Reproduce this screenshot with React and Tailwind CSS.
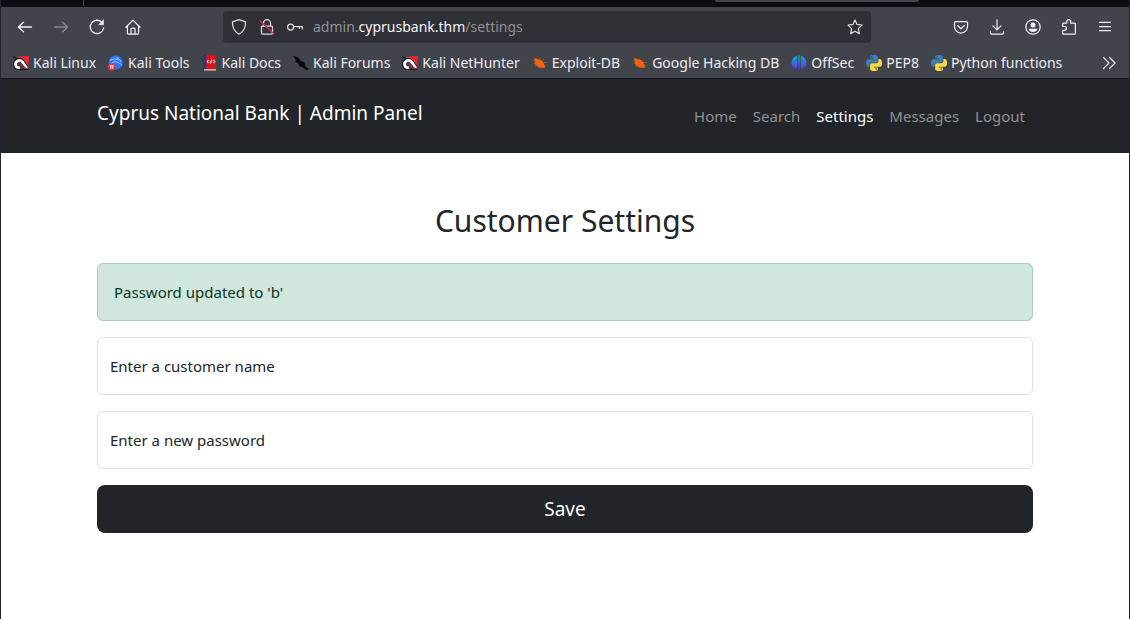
import { useState } from "react";

const PY =
  "M14.25.18l.9.2.73.26.59.3.45.32.34.34.25.34.16.33.1.3.04.26.02.2-.01.13V8.5l-.05.63-.13.55-.21.46-.26.38-.3.31-.33.25-.35.19-.35.14-.33.1-.3.07-.26.04-.21.02H8.77l-.69.05-.59.14-.5.22-.41.27-.33.32-.27.35-.2.36-.15.37-.1.35-.07.32-.04.27-.02.21v3.06H3.17l-.21-.03-.28-.07-.32-.12-.35-.18-.36-.26-.36-.36-.35-.46-.32-.59-.28-.73-.21-.88-.14-1.05-.05-1.23.06-1.22.16-1.04.24-.87.32-.71.36-.57.4-.44.42-.33.42-.24.4-.16.36-.1.32-.05.24-.01h.16l.06.01h8.16v-.83H6.18l-.01-2.75-.02-.37.05-.34.11-.31.17-.28.25-.26.31-.23.38-.2.44-.18.51-.15.58-.12.64-.1.71-.06.77-.04.84-.02 1.27.05zm-6.3 1.98l-.23.33-.08.41.08.41.23.34.33.22.41.09.41-.09.33-.22.23-.34.08-.41-.08-.41-.23-.33-.33-.22-.41-.09-.41.09z";

function Icon({ children }) {
  return (
    <svg
      className="size-4 shrink-0 overflow-visible"
      viewBox="0 0 16 16"
      fill="none"
      stroke="currentColor"
      strokeWidth="1.25"
      strokeLinecap="round"
      strokeLinejoin="round"
      aria-hidden="true"
    >
      {children}
    </svg>
  );
}

const BackIcon = () => (
  <Icon><path d="M14.500 8H1.500M6.500 3.200 1.400 8l5.100 4.800" strokeWidth="1.400" /></Icon>
);
const ForwardIcon = () => (
  <Icon><path d="M1.500 8h13M9.500 3.200 14.600 8l-5.100 4.800" strokeWidth="1.400" /></Icon>
);
const ReloadIcon = () => (
  <Icon>
    <path d="M14.600 9A6.700 6.700 0 1 1 12.900 3.400" strokeWidth="1.300" />
    <path d="M9.900 5.700h4.600V1.100z" fill="currentColor" strokeWidth="0.600" />
  </Icon>
);
const HomeIcon = () => (
  <Icon>
    <path d="M.9 8.200 8 1.100l7.100 7.100M2.400 6.900v7.200c0 .5.4.9.9.9h9.400c.5 0 .9-.4.9-.9V6.900" />
    <path d="M6 14.800V10c0-.6.4-1 1-1h2c.6 0 1 .4 1 1v4.800" />
  </Icon>
);
const ShieldIcon = () => (
  <Icon><path d="M8 .7 14.500 2.900c.3 5-1.700 9.600-6.500 12.400C3.200 12.500 1.200 7.900 1.500 2.900z" /></Icon>
);
const LockIcon = () => (
  <Icon>
    <path d="M4.500 7V4.200a3.500 3.500 0 0 1 7 0V7M3.500 7h9c.6 0 1 .4 1 1v6c0 .6-.4 1-1 1h-9c-.6 0-1-.4-1-1V8c0-.6.4-1 1-1z" />
    <path d="M1 1.800 14.800 14.800" stroke="#e22850" />
  </Icon>
);
const KeyIcon = () => (
  <Icon>
    <circle cx="3.600" cy="8" r="3" />
    <path d="M6.600 7.500h8.800v2.400M12.400 7.500v2" />
  </Icon>
);
const StarIcon = () => (
  <Icon><path d="m8 .9 2.100 4.500 4.900.7-3.600 3.500.9 5L8 12.200l-4.300 2.400.9-5L1 6.100l4.900-.7z" /></Icon>
);
const PocketIcon = () => (
  <Icon>
    <path d="M2.500 2.500h11c.6 0 1 .4 1 1v4a6.500 6.500 0 0 1-13 0v-4c0-.6.4-1 1-1z" />
    <path d="M4.800 6.700 8 9.800l3.200-3.100" />
  </Icon>
);
const DownloadIcon = () => (
  <Icon><path d="M8 .8v9.900M4 6.900l4 4 4-4M1.500 12.300v1.400c0 .7.600 1.300 1.300 1.300h10.400c.7 0 1.300-.6 1.300-1.300v-1.400" /></Icon>
);
const AccountIcon = () => (
  <Icon>
    <circle cx="8" cy="8" r="7.200" />
    <circle cx="8" cy="5.900" r="2.500" fill="currentColor" stroke="none" />
    <path d="M3.600 9.700h8.800a4.500 4.200 0 0 1-8.800 0z" fill="currentColor" stroke="none" />
  </Icon>
);
const ExtensionIcon = () => (
  <Icon>
    <path d="M1.600 7.300V5c0-.5.4-.9.9-.9h3.300V2.500a1.900 1.900 0 0 1 3.800 0v1.600h3.900c.5 0 .9.4.9.9v9.200c0 .5-.4.9-.9.900h-11c-.5 0-.9-.4-.9-.9v-2.800h1.700a2 2 0 0 0 0-4.100z" />
  </Icon>
);
const MenuIcon = () => (
  <Icon><path d="M2.500 3.300h11M2.500 7.500h11M2.500 11.700h11" /></Icon>
);
const OverflowIcon = () => (
  <Icon><path d="m2.500 2.500 5.500 5.500-5.500 5.500M8.500 2.500 14 8l-5.500 5.500" /></Icon>
);

function Favicon({ kind }) {
  const cls = "size-4 shrink-0";
  if (kind === "python")
    return (
      <svg className={cls} viewBox="0 0 24 24" aria-hidden="true">
        <path d={PY} fill="#3d7eb5" />
        <path d={PY} fill="#ffd93b" transform="rotate(180 12 12)" />
      </svg>
    );
  if (kind === "kali")
    return (
      <svg className={cls} viewBox="0 0 16 16" aria-hidden="true">
        <path d="M4.500 1.500 16 1l-.8 13.500L9 9z" fill="#ec2630" />
        <path d="M0 1.200 3.500 3.500M1 12.500l3 2h11" stroke="#17181c" strokeWidth="1.200" fill="none" />
        <path d="M6.500 12.500C1.800 13.500.6 8 4 5.600c4.800-2.600 6.500 3.200 9.800 6.900" stroke="#17181c" strokeWidth="4.200" fill="none" />
        <path d="M6.800 12.500C2.400 13.400 1.200 8 4.400 5.900c4.500-2.300 6.200 3 9.400 6.900" stroke="#fff" strokeWidth="2.800" fill="none" />
        <path d="M5.800 9c2.400-1.200 3.700 2.500 7.200 4.600" stroke="#b51f2d" strokeWidth="1.300" fill="none" />
      </svg>
    );
  if (kind === "tools")
    return (
      <svg className={cls} viewBox="0 0 16 16" aria-hidden="true">
        <circle cx="7.700" cy="7.500" r="7.100" fill="#2777ff" />
        <path d="M2 5.500c3-2 6-2 8.500-.3M3.500 8.200c2.500-2 5-1.500 7-.4 1.500 1 2.800 1 3.300 2.700M8.500 2.800c2 .5 3.500 2 4.300 4" stroke="#a5c8ff" strokeWidth="1" fill="none" />
        <circle cx="3.600" cy="12" r="3.700" fill="#ed2b35" />
        <path d="M1.600 10.700h4.200M2.900 10.700v3.200M4.800 10.700v3.200" stroke="#fff" strokeWidth="1" />
      </svg>
    );
  if (kind === "docs")
    return (
      <svg className={cls} viewBox="0 0 16 16" aria-hidden="true">
        <path d="M1.500 0H5v15H1.500z" fill="#173f80" />
        <path d="M4.200 0H14v14H4.200z" fill="#df1116" />
        <path d="M2 14.300h12v1.200H2z" fill="#e9dfdc" />
        <path d="M6.500 5 5.200 6.500 6.500 8M11.500 5l1.200 1.500L11.500 8M9.800 4.500l-1.600 4" stroke="#fff" strokeWidth="1.100" fill="none" />
      </svg>
    );
  if (kind === "forums")
    return (
      <svg className={cls} viewBox="0 0 16 16" aria-hidden="true">
        <path d="M0 .5 6 3l1 2.500 4.500 2L12 11l4 3-2.500 1.500-4-3.500-3-.5-1-3L2 6.500l1-1z" fill="#08090b" />
      </svg>
    );
  if (kind === "exploit")
    return (
      <svg className={cls} viewBox="0 0 16 16" aria-hidden="true">
        <path d="M2 3.200c2.500-.2 3.700 1 5.200 1.200 2.300.6 4 2 4.600 4l1.500 4C10 13.200 7 12.700 5.200 11.200 3.500 10 2.500 8.500 2.800 6.500z" fill="#f2620f" />
        <path d="M1 5.200l2.500 1.300M1 8.500l2.500 0M3 11.500l2.500-1M7 5 8.500 3.200M9.500 6l2.300-1.500M11 7.500h4M12 10l2.500.5M7 12l.5 1.200" stroke="#b9582a" strokeWidth=".7" fill="none" />
      </svg>
    );
  return (
    <svg className={cls} viewBox="0 0 16 16" aria-hidden="true">
      <defs>
        <linearGradient id="offsec" gradientUnits="userSpaceOnUse" x1="0" y1="0" x2="0" y2="16">
          <stop offset="0" stopColor="#12a5c4" />
          <stop offset="0.500" stopColor="#3470d8" />
          <stop offset="1" stopColor="#5b21c6" />
        </linearGradient>
      </defs>
      <path
        d="M7.300.5v15.200h1.400V.5zM6.200.8v12.800l-1.600-1.300v2C1.800 13.400.4 10.800.6 7.600.8 4 3 1.500 6.200.8zM9.800.8v12.800l1.600-1.300v2c2.800-.9 4.200-3.500 4-6.700C15.200 4 13 1.500 9.800.8z"
        fill="url(#offsec)"
      />
    </svg>
  );
}

const bookmarks = [
  ["kali", "Kali Linux"],
  ["tools", "Kali Tools"],
  ["docs", "Kali Docs"],
  ["forums", "Kali Forums"],
  ["kali", "Kali NetHunter"],
  ["exploit", "Exploit-DB"],
  ["exploit", "Google Hacking DB"],
  ["offsec", "OffSec"],
  ["python", "PEP8"],
  ["python", "Python functions"],
];

function ToolButton({ label, disabled, children }) {
  return (
    <button
      type="button"
      aria-label={label}
      disabled={disabled}
      className="flex h-8 w-9 items-center justify-center rounded text-[#f0f0f3] enabled:hover:bg-white/10 disabled:opacity-40"
    >
      {children}
    </button>
  );
}

function UrlButton({ label, children }) {
  return (
    <button
      type="button"
      aria-label={label}
      className="flex h-7 w-7 shrink-0 items-center justify-center rounded text-[#dcdce0] hover:bg-white/10"
    >
      {children}
    </button>
  );
}

function AddressBar() {
  const [focused, setFocused] = useState(false);
  const [value, setValue] = useState("admin.cyprusbank.thm/settings");
  return (
    <div className="flex h-8 min-w-0 flex-1 items-center rounded bg-[#303136] px-0.5">
      <UrlButton label="Tracking protection"><ShieldIcon /></UrlButton>
      <UrlButton label="Connection not secure"><LockIcon /></UrlButton>
      <UrlButton label="Saved logins"><KeyIcon /></UrlButton>
      <div className="relative flex h-full min-w-0 flex-1 items-center pl-1">
        <input
          type="text"
          aria-label="Address"
          className="w-full bg-transparent text-[#fbfbfe] outline-none"
          value={focused ? value : ""}
          onChange={(e) => setValue(e.target.value)}
          onFocus={() => setFocused(true)}
          onBlur={() => setFocused(false)}
        />
        {!focused && (
          <div className="pointer-events-none absolute inset-0 flex items-center pl-1 text-[#8f9095]">
            <span>admin.</span>
            <span className="text-[#f4f4f6]">cyprusbank.thm</span>
            <span>/settings</span>
          </div>
        )}
      </div>
      <UrlButton label="Bookmark this page"><StarIcon /></UrlButton>
    </div>
  );
}

function BrowserChrome() {
  return (
    <div className="bg-[#42444c] text-[14px] text-[#ececf0]">
      <div className="flex h-[7px] items-start bg-[#0c0d11]">
        <div className="h-1.5 w-[83px] border-r border-[#45464c]" />
        <div className="flex-1" />
        <div className="h-0.5 w-[204px] rounded-b bg-[#42444c]" />
        <div className="w-[210px]" />
      </div>
      <div className="flex h-10 items-center px-1.5">
        <ToolButton label="Back"><BackIcon /></ToolButton>
        <ToolButton label="Forward" disabled><ForwardIcon /></ToolButton>
        <ToolButton label="Reload"><ReloadIcon /></ToolButton>
        <ToolButton label="Home"><HomeIcon /></ToolButton>
        <div className="w-18 shrink-0" />
        <AddressBar />
        <div className="w-18 shrink-0" />
        <ToolButton label="Save to Pocket"><PocketIcon /></ToolButton>
        <ToolButton label="Downloads"><DownloadIcon /></ToolButton>
        <ToolButton label="Account"><AccountIcon /></ToolButton>
        <ToolButton label="Extensions"><ExtensionIcon /></ToolButton>
        <ToolButton label="Menu"><MenuIcon /></ToolButton>
      </div>
      <div className="flex h-8 items-center border-b border-[#121317] px-3">
        <nav aria-label="Bookmarks" className="flex min-w-0 flex-1 gap-3 overflow-hidden">
          {bookmarks.map(([kind, name]) => (
            <a key={name} href="#" className="flex items-center gap-1 whitespace-nowrap">
              <Favicon kind={kind} />
              {name}
            </a>
          ))}
        </nav>
        <button type="button" aria-label="More bookmarks" className="shrink-0">
          <OverflowIcon />
        </button>
      </div>
    </div>
  );
}

const links = ["Home", "Search", "Settings", "Messages", "Logout"];

function SiteHeader() {
  return (
    <header className="bg-[#212529] text-white">
      <div className="mx-auto flex max-w-[960px] items-start justify-between px-3 pt-4 pb-4">
        <a href="#" className="py-1 text-[19px] leading-7">
          Cyprus National Bank | Admin Panel
        </a>
        <nav aria-label="Main" className="flex py-[9px]">
          {links.map((name) => (
            <a
              key={name}
              href="#"
              aria-current={name === "Settings" ? "page" : undefined}
              className="px-2 text-[#909294] aria-[current=page]:text-white"
            >
              {name}
            </a>
          ))}
        </nav>
      </div>
    </header>
  );
}

function Field({ id, label, type }) {
  return (
    <div className="relative">
      <input
        id={id}
        type={type}
        placeholder=" "
        className="peer block h-[58px] w-full rounded-md border border-[#dee2e6] px-3 pt-5 text-[#212529] outline-none focus:border-[#86b7fe]"
      />
      <label
        htmlFor={id}
        className="pointer-events-none absolute inset-0 flex items-start px-[13px] pt-1 text-xs peer-placeholder-shown:items-center peer-placeholder-shown:pt-0 peer-placeholder-shown:text-[15px]"
      >
        {label}
      </label>
    </div>
  );
}

export default function App() {
  return (
    <div className="min-h-screen border-x border-[#22242f] bg-white font-['Noto_Sans',sans-serif] text-[15px] leading-6 text-[#212529]">
      <BrowserChrome />
      <SiteHeader />
      <main className="mx-auto max-w-[960px] px-3 pt-12 pb-12">
        <h1 className="mb-[22px] text-center text-[30px] leading-10">Customer Settings</h1>
        <form className="flex flex-col gap-4" onSubmit={(e) => e.preventDefault()}>
          <div role="alert" className="rounded-md border border-[#a3cfbb] bg-[#d1e7dd] p-4 text-[#0a3622]">
            Password updated to 'b'
          </div>
          <Field id="customer" label="Enter a customer name" type="text" />
          <Field id="password" label="Enter a new password" type="text" />
          <button type="submit" className="h-12 rounded-lg bg-[#212529] text-[19px] text-white">
            Save
          </button>
        </form>
      </main>
    </div>
  );
}
